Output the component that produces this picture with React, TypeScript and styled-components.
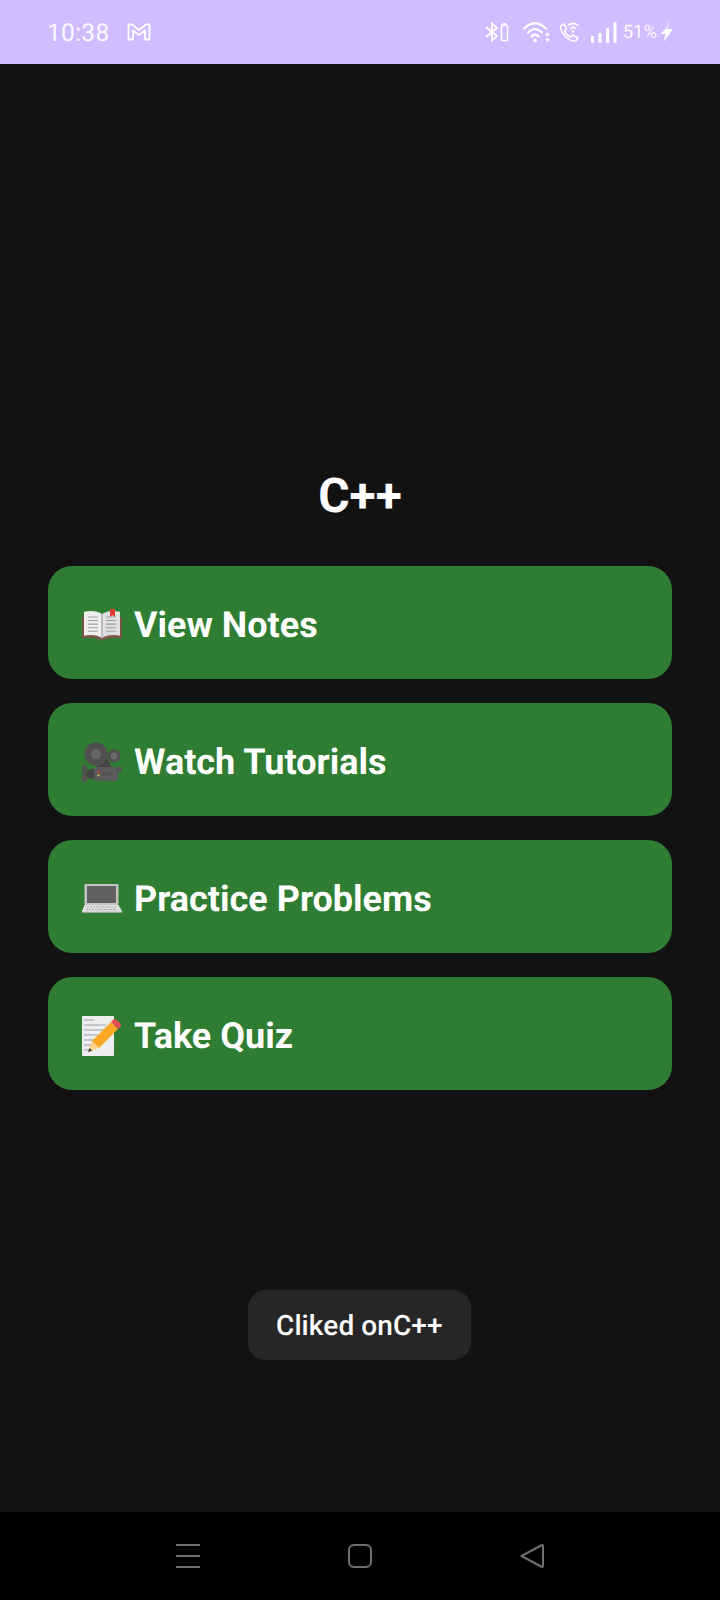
import React from "react";
import styled, { createGlobalStyle } from "styled-components";

const GlobalStyle = createGlobalStyle`
  html, body {
    margin: 0;
    padding: 0;
    background: #121212;
  }
  * {
    box-sizing: border-box;
  }
`;

const BookIcon = () => (
  <svg width="40" height="40" viewBox="0 0 40 40">
    <g transform="translate(0 4) scale(1 0.89)">
      <path d="M0 9 L0 33 Q10 31 17 34 Q20 37 23 34 Q30 31 40 33 L40 9 Z" fill="#795548" />
      <path d="M2 3 Q12 1 19.500 5 L19.500 32 Q12 28 2 30 Z" fill="#eeeeee" />
      <path d="M38 3 Q28 1 20.500 5 L20.500 32 Q28 28 38 30 Z" fill="#e0e0e0" />
      <path d="M19 6 L21 6 L21 33 L19 33 Z" fill="#bdbdbd" />
      <g stroke="#9e9e9e" strokeWidth="1.200" fill="none">
        <path d="M6 9 H16 M6 13 H16 M6 17 H16 M6 21 H16 M6 25 H16" />
        <path d="M24 9 H34 M24 13 H34 M24 17 H34 M24 21 H34 M24 25 H34" />
      </g>
      <path d="M28 0 H33 V9 L30.500 7 L28 9 Z" fill="#e53935" />
    </g>
  </svg>
);

const CameraIcon = () => (
  <svg width="40" height="40" viewBox="0 0 40 40">
    <path d="M14 26 L24 13 L30 26 Z" fill="#444" />
    <circle cx="14" cy="12" r="11.500" fill="#505050" />
    <circle cx="14" cy="12" r="5" fill="#666" />
    <circle cx="32" cy="14" r="6.500" fill="#505050" />
    <circle cx="32" cy="14" r="3.500" fill="#6a6a6a" />
    <rect x="12" y="25" width="24" height="14" rx="2" fill="#5a5a5a" />
    <rect x="35" y="25" width="5" height="5" fill="#555" />
    <path d="M12 27 L5 28 V36 L12 37 Z" fill="#444" />
    <rect x="0" y="23" width="5" height="17" rx="1.500" fill="#525252" />
    <rect x="19" y="29" width="13" height="6" rx="1" fill="#555" stroke="#6e6e6e" strokeWidth="0.700" />
    <circle cx="16.500" cy="30" r="1.100" fill="#e53935" />
    <circle cx="16.500" cy="33.500" r="1.100" fill="#cddc39" />
  </svg>
);

const LaptopIcon = () => (
  <svg width="40" height="40" viewBox="0 0 40 40">
    <rect x="2.500" y="5" width="34" height="21" rx="1" fill="#c4c4c4" />
    <rect x="5" y="7" width="29" height="17" fill="#616161" />
    <path d="M2.500 26 H36.500 L40 32 V34 H0 V32 Z" fill="#e0e0e0" />
    <path d="M5 28 H34 M4 30.500 H35" stroke="#a8a8a8" strokeWidth="1.200" strokeDasharray="2 1" />
    <rect x="0" y="32.800" width="40" height="1.200" fill="#a0a0a0" />
  </svg>
);

const MemoIcon = () => (
  <svg width="40" height="40" viewBox="0 0 40 40">
    <rect x="0" y="0" width="32" height="40" rx="1" fill="#eeeeee" />
    <path d="M2 4 H12 M2 9 H24 M2 14 H24 M2 19 H24 M2 24 H20 M2 29 H14 M2 34 H10" stroke="#a0a0a0" strokeWidth="1" />
    <path d="M29 6 L36 13 L17 32 L10 25 Z" fill="#f9a825" />
    <path d="M29 6 L32 3 Q34 3 38 7 Q40 10 39 10 L36 13 Z" fill="#e05050" />
    <path d="M10 25 L17 32 L6 36 Z" fill="#fbd38d" />
    <path d="M7.500 32 L10 34.700 L6 36 Z" fill="#333" />
  </svg>
);

const MailGlyph = () => (
  <svg width="24" height="18" viewBox="0 0 24 18" fill="none" stroke="#fff" strokeWidth="1.800" strokeLinejoin="round">
    <path d="M1.500 1.500 H5 L12 7 L19 1.500 H22.500 V16.500 H18 V7.500 L12 12 L6 7.500 V16.500 H1.500 Z" />
  </svg>
);

const BluetoothBattery = () => (
  <svg width="24" height="20" viewBox="0 0 24 20" fill="none" stroke="#fff" strokeWidth="1.800">
    <path d="M1 5 L12 14 L7 18.500 V1.500 L12 6 L1 15" />
    <rect x="16.500" y="3" width="6" height="15.500" rx="1" strokeWidth="1.500" />
    <rect x="18" y="1" width="3" height="2" fill="#fff" stroke="none" />
  </svg>
);

const WifiGlyph = () => (
  <svg width="28" height="22" viewBox="0 0 28 22" fill="none" stroke="#fff" strokeWidth="2.200" strokeLinecap="round">
    <path d="M1 7.500 Q12 -3 23 7.500" />
    <path d="M5 11.500 Q12 4.500 19 11.500" />
    <path d="M8.500 15.500 Q12 11.500 15.500 15.500" />
    <circle cx="12" cy="19.500" r="2" fill="#fff" stroke="none" />
    <path d="M24.500 11 L27 14.500 H22 Z M24.500 21 L27 17.500 H22 Z" fill="#fff" stroke="none" />
  </svg>
);

const WifiCallGlyph = () => (
  <svg width="21" height="20" viewBox="0 0 21 20" fill="none" stroke="#fff" strokeWidth="1.500" strokeLinecap="round" strokeLinejoin="round">
    <path d="M1.500 4 L5 2 L7.500 7 L5.500 9 Q7 13 11.500 15 L13.500 13 L19 16 L17 19 Q12 19.500 7 15 Q1.500 10 1.500 4 Z" />
    <path d="M9 3.500 Q14 -0.800 19 3.500 M11.500 6.500 Q14 4.300 16.500 6.500" />
    <circle cx="14" cy="9.500" r="1.200" fill="#fff" stroke="none" />
  </svg>
);

const SignalGlyph = () => (
  <svg width="26" height="21" viewBox="0 0 26 21" fill="#fff">
    <rect x="0" y="14" width="3" height="7" rx="1" />
    <rect x="7.500" y="11" width="3" height="10" rx="1" />
    <rect x="15" y="6" width="3" height="15" rx="1" />
    <rect x="22.500" y="0" width="3" height="21" rx="1" />
  </svg>
);

const BoltGlyph = () => (
  <svg width="13" height="22" viewBox="0 0 13 22">
    <path d="M9 0 L2 11 H6 V12 L11 8 H9 Z" fill="#fff" fillOpacity="0.35" />
    <path d="M13 8 H6.500 L0 13 H5.500 L3.500 21 Z" fill="#fff" />
  </svg>
);

const MenuGlyph = () => (
  <svg width="24" height="24" viewBox="0 0 24 24" stroke="#6f6f6f" strokeWidth="2">
    <path d="M0 1 H24 M0 12 H24 M0 23 H24" />
  </svg>
);

const HomeGlyph = () => (
  <svg width="24" height="24" viewBox="0 0 24 24" fill="none" stroke="#6f6f6f" strokeWidth="2">
    <rect x="1" y="1" width="22" height="22" rx="5" />
  </svg>
);

const BackGlyph = () => (
  <svg width="24" height="24" viewBox="0 0 24 24" fill="none" stroke="#6f6f6f" strokeWidth="2" strokeLinejoin="round">
    <path d="M1.500 12 L22 1 Q23 1 23 2 V22 Q23 23 22 23 Z" />
  </svg>
);

const actions = [
  { icon: <BookIcon />, label: "View Notes" },
  { icon: <CameraIcon />, label: "Watch Tutorials" },
  { icon: <LaptopIcon />, label: "Practice Problems" },
  { icon: <MemoIcon />, label: "Take Quiz" },
];

const App = () => {
  return (
    <>
      <GlobalStyle />
      <Screen>
        <StatusBar>
          <StatusLeft>
            <Clock>10:38</Clock>
            <MailGlyph />
          </StatusLeft>
          <StatusRight>
            <StatusSlot $after={14}>
              <BluetoothBattery />
            </StatusSlot>
            <StatusSlot $after={8}>
              <WifiGlyph />
            </StatusSlot>
            <StatusSlot $after={11}>
              <WifiCallGlyph />
            </StatusSlot>
            <StatusSlot $after={6}>
              <SignalGlyph />
            </StatusSlot>
            <StatusSlot $after={3}>
              <Battery>51%</Battery>
            </StatusSlot>
            <BoltGlyph />
          </StatusRight>
        </StatusBar>
        <Content>
          <Title>C++</Title>
          <ActionList>
            {actions.map((action) => (
              <ActionButton key={action.label}>
                {action.icon}
                <ActionLabel>{action.label}</ActionLabel>
              </ActionButton>
            ))}
          </ActionList>
          <Toast>Cliked onC++</Toast>
        </Content>
        <NavBar>
          <MenuGlyph />
          <HomeGlyph />
          <BackGlyph />
        </NavBar>
      </Screen>
    </>
  );
};

const Screen = styled("div")`
  width: 720px;
  height: 1600px;
  display: flex;
  flex-direction: column;
  font-family: Roboto, "Liberation Sans", sans-serif;
  text-rendering: geometricPrecision;
  color: #fff;
`;

const StatusBar = styled("header")`
  height: 64px;
  padding: 0 47px;
  display: flex;
  align-items: center;
  justify-content: space-between;
  background: #d0bcff;
`;

const StatusLeft = styled("div")`
  display: flex;
  align-items: center;
  gap: 17px;
`;

const Clock = styled("span")`
  font-size: 24.500px;
  letter-spacing: 0.3px;
  color: #fbf8ff;
`;

const StatusRight = styled("div")`
  display: flex;
  align-items: center;
`;

const StatusSlot = styled("span")<{ $after: number }>`
  display: flex;
  align-items: center;
  margin-right: ${(p) => p.$after}px;
`;

const Battery = styled("span")`
  font-size: 18.500px;
  color: #fbf8ff;
`;

const Content = styled("main")`
  position: relative;
  flex: 1;
  padding: 402px 48px 0;
  background: #121212;
`;

const Title = styled("h1")`
  margin: 0 0 40px;
  font-size: 48px;
  line-height: 60px;
  font-weight: 700;
  text-align: center;
`;

const ActionList = styled("div")`
  display: flex;
  flex-direction: column;
  gap: 24px;
`;

const ActionButton = styled("div")`
  height: 113px;
  padding: 5px 33px 0 34px;
  display: flex;
  align-items: center;
  gap: 12px;
  border-radius: 24px;
  background: #2e7d32;
`;

const ActionLabel = styled("span")`
  font-size: 36px;
  font-weight: 700;
`;

const Toast = styled("div")`
  position: absolute;
  top: 1226px;
  left: 248px;
  width: 223px;
  height: 70px;
  padding-left: 28px;
  display: flex;
  align-items: center;
  border-radius: 18px;
  background: #262626;
  font-size: 28px;
  font-weight: 500;
  letter-spacing: 0.1px;
`;

const NavBar = styled("nav")`
  height: 88px;
  padding: 0 176px;
  display: flex;
  align-items: center;
  justify-content: space-between;
  background: #000;
`;

export default App;
